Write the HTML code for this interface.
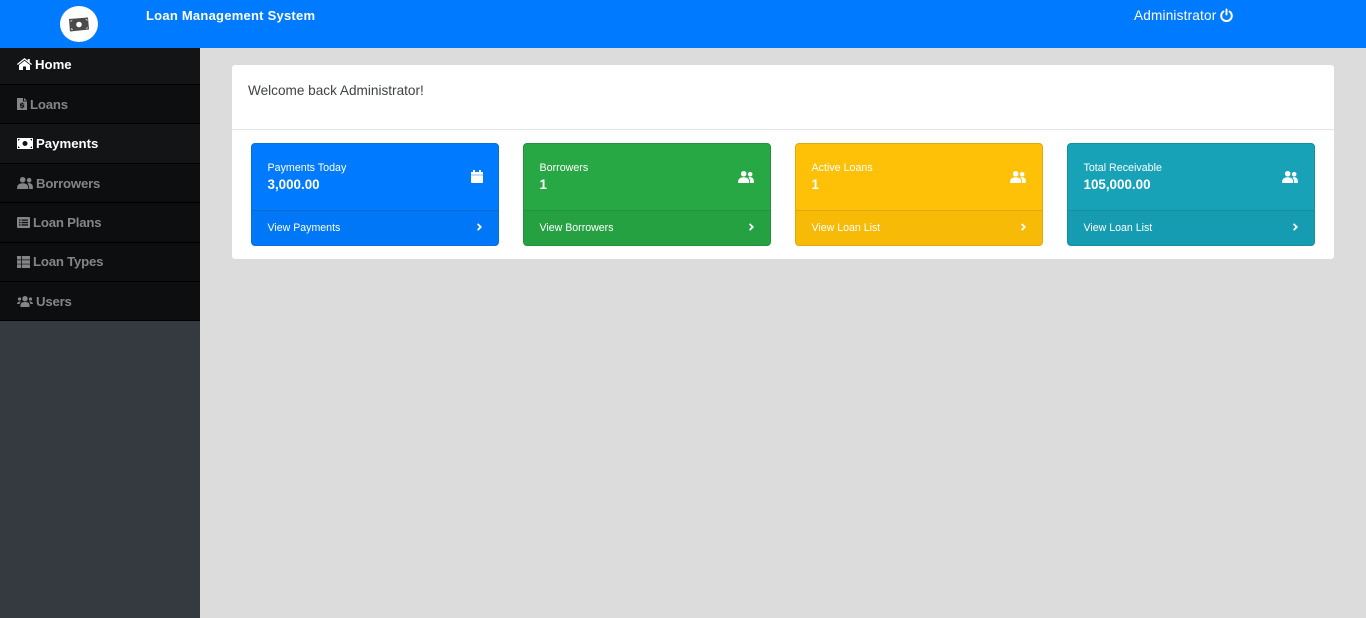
<!DOCTYPE html>
<html><head><meta charset="utf-8"><title>Loan Management System</title>
<style>
html,body{margin:0;padding:0}
body{width:1366px;height:618px;overflow:hidden;background:#dcdcdc;position:relative;font-family:"Liberation Sans",sans-serif;color:#fff}
.a{position:absolute;white-space:nowrap}
#top{left:0;top:0;width:1366px;height:48px;background:#007bff}
#side{left:0;top:48px;width:200px;height:570px;background:#343a40}
.n{position:absolute;left:0;width:200px;background:#0d0e10;border-bottom:1px solid #000;box-sizing:border-box}
.n.on{background:#131416}
.n span{position:absolute;font-size:13.200px;line-height:16px;font-weight:700;color:#838587;white-space:nowrap;letter-spacing:-.2px}
.n.on span{color:#fff;letter-spacing:0}
.n svg{position:absolute;fill:#838587}
.n.on svg{fill:#fff}
#main{left:232px;top:65px;width:1102px;height:194px;background:#fff;border-radius:3px}
#line{left:232px;top:129px;width:1102px;height:1px;background:#e4e4e4}
.c{position:absolute;top:143px;width:248px;height:103px;box-sizing:border-box;border-radius:4px;border:1px solid}
.c .f{position:absolute;left:0;right:0;top:66px;bottom:0;border-top:1px solid;border-radius:0 0 3px 3px;background:rgba(0,0,0,.03)}
.c .t{position:absolute;left:15.500px;top:18px;font-size:10.700px;line-height:13px;white-space:nowrap}
.c .v{position:absolute;left:15.500px;top:33px;font-size:13.400px;line-height:16px;font-weight:700;white-space:nowrap}
.c .l{position:absolute;left:15.500px;top:11px;font-size:10.600px;line-height:13px;white-space:nowrap}
.c svg{position:absolute;fill:#fff}
</style></head><body>
<div class="a" id="top"></div>
<div class="a" style="left:60px;top:6px;width:38px;height:36px;border-radius:50%;background:#fff"></div>
<svg class="a" style="left:69px;top:17px" width="20" height="15" viewBox="0 0 20 15"><path fill="#4a4a4a" d="M0 2 19 .5 20 12.500 1 14.500Z"/><circle cx="10" cy="7.500" r="2.800" fill="#fff"/><path fill="#ccc" d="M1.500 3.200h2.300l-2.100 2zM18.400 2v2.300l-2.100-2.100zM2.200 13v-2.300l2.200 2.100zM18.800 11.400l-2.300.3 2.100-2.100z"/></svg>
<div class="a" style="left:146px;top:8px;font-size:13px;font-weight:700;line-height:15px;letter-spacing:.24px">Loan Management System</div>
<div class="a" style="left:1134px;top:8px;font-size:13.600px;line-height:15px;letter-spacing:.18px">Administrator</div>
<svg class="a" style="left:1220px;top:8px" width="13" height="14" viewBox="0 0 13 14"><path fill="none" stroke="#fff" stroke-width="2" stroke-linecap="round" d="M3.400 3.500A5.300 5.300 0 1 0 9.600 3.500M6.500 1.500v5"/></svg>

<div class="a" id="side"></div>
<div class="n on" style="top:48px;height:37px"><svg style="left:17px;top:10px" width="15" height="12" viewBox="0 0 15 12"><path d="M7.500 0 10.800 2.600V1H12.800V4.200L15 6 14.200 7 7.500 1.600.8 7 0 6ZM2 7 7.500 2.800 13 7V12H9V8.500H6V12H2Z"/></svg><span style="left:35px;top:9px">Home</span></div>
<div class="n" style="top:85px;height:39px"><svg style="left:17px;top:13px" width="10" height="12" viewBox="0 0 10 12"><path fill-rule="evenodd" d="M0 0H6V3.500H10V12H0ZM7 0 10 2.600H7ZM4.500 4.500h1.200v1h1.500v1H4.200v.6H7.200V9.500H5.700v1H4.500v-1H3v-1H6v-.6H3V5.500H4.500Z"/></svg><span style="left:30px;top:12px">Loans</span></div>
<div class="n on" style="top:124px;height:40px"><svg style="left:17px;top:14px" width="16" height="11" viewBox="0 0 16 11"><path fill-rule="evenodd" d="M0 0H16V11H0ZM8 3A2.500 2.500 0 1 0 8 8 2.500 2.500 0 0 0 8 3ZM1 1V3L3 1ZM15 1H13L15 3ZM1 10H3L1 8ZM15 10V8L13 10Z"/></svg><span style="left:36px;top:12px">Payments</span></div>
<div class="n" style="top:164px;height:39px"><svg style="left:17px;top:13px" width="16" height="12" viewBox="0 0 17 13"><circle cx="6" cy="3" r="3"/><circle cx="13" cy="3.500" r="2.500"/><path d="M0 13V11.500C0 8.500 2.500 6.800 6 6.800S12 8.500 12 11.500V13ZM13 13V11.500C13 9.500 12.200 8 11 7 14 5.800 17 7.500 17 10.500V13Z"/></svg><span style="left:36px;top:12px">Borrowers</span></div>
<div class="n" style="top:203px;height:40px"><svg style="left:17px;top:14px" width="13" height="11" viewBox="0 0 13 11"><path fill-rule="evenodd" d="M1 0H12Q13 0 13 1V10Q13 11 12 11H1Q0 11 0 10V1Q0 0 1 0ZM2 2.500V3.800H3.500V2.500ZM2 4.900V6.200H3.500V4.900ZM2 7.300V8.600H3.500V7.300ZM4.500 2.500V3.800H11V2.500ZM4.500 4.900V6.200H11V4.900ZM4.500 7.300V8.600H11V7.300Z"/></svg><span style="left:33px;top:12px">Loan Plans</span></div>
<div class="n" style="top:243px;height:39px"><svg style="left:17px;top:13px" width="13" height="12" viewBox="0 0 13 12"><path d="M0 0H4V3.500H0ZM4.800 0H13V3.500H4.800ZM0 4.200H4V7.700H0ZM4.800 4.200H13V7.700H4.800ZM0 8.400H4V12H0ZM4.800 8.400H13V12H4.800Z"/></svg><span style="left:33px;top:11px">Loan Types</span></div>
<div class="n" style="top:282px;height:39px"><svg style="left:17px;top:14px" width="16" height="11" viewBox="0 0 16 11"><circle cx="8" cy="2.700" r="2.700"/><circle cx="2.500" cy="3" r="1.600"/><circle cx="13.500" cy="3" r="1.600"/><path d="M3.500 11V9C3.500 7 5 6 8 6S12.500 7 12.500 9V11ZM0 8C0 6 2 5.300 4 5.500 3 6.300 2.700 7.100 2.600 8ZM16 8C16 6 14 5.300 12 5.500 13 6.300 13.300 7.100 13.400 8Z"/></svg><span style="left:36px;top:12px">Users</span></div>

<div class="a" id="main"></div>
<div class="a" id="line"></div>
<div class="a" style="left:248px;top:83px;font-size:13.600px;line-height:16px;color:#3f4347">Welcome back Administrator!</div>

<div class="c" style="left:251px;background:#007bff;border-color:#0a6fd8">
 <div class="t">Payments Today</div><div class="v">3,000.00</div>
 <svg style="left:219px;top:26px" width="12" height="13" viewBox="0 0 12 13"><path d="M2 0h2v2h4V0h2v2h2v2.800H0V2h2ZM0 5.300H12V12Q12 13 11 13H1Q0 13 0 12Z"/></svg>
 <div class="f" style="border-color:#0a6ac9"><div class="l">View Payments</div><svg style="left:224.500px;top:12px" width="5" height="8" viewBox="0 0 6 9"><path d="M1.500 0 6 4.500 1.500 9 0 7.500 3 4.500 0 1.500Z"/></svg></div>
</div>
<div class="c" style="left:523px;background:#28a745;border-color:#23923d">
 <div class="t">Borrowers</div><div class="v">1</div>
 <svg style="left:214px;top:27px" width="16" height="12" viewBox="0 0 17 13"><circle cx="6" cy="3" r="3"/><circle cx="13" cy="3.500" r="2.500"/><path d="M0 13V11.500C0 8.500 2.500 6.800 6 6.800S12 8.500 12 11.500V13ZM13 13V11.500C13 9.500 12.200 8 11 7 14 5.800 17 7.500 17 10.500V13Z"/></svg>
 <div class="f" style="border-color:#23923d"><div class="l">View Borrowers</div><svg style="left:224.500px;top:12px" width="5" height="8" viewBox="0 0 6 9"><path d="M1.500 0 6 4.500 1.500 9 0 7.500 3 4.500 0 1.500Z"/></svg></div>
</div>
<div class="c" style="left:795px;background:#ffc107;border-color:#deaa0f">
 <div class="t">Active Loans</div><div class="v">1</div>
 <svg style="left:214px;top:27px" width="16" height="12" viewBox="0 0 17 13"><circle cx="6" cy="3" r="3"/><circle cx="13" cy="3.500" r="2.500"/><path d="M0 13V11.500C0 8.500 2.500 6.800 6 6.800S12 8.500 12 11.500V13ZM13 13V11.500C13 9.500 12.200 8 11 7 14 5.800 17 7.500 17 10.500V13Z"/></svg>
 <div class="f" style="border-color:#deaa0f"><div class="l">View Loan List</div><svg style="left:224.500px;top:12px" width="5" height="8" viewBox="0 0 6 9"><path d="M1.500 0 6 4.500 1.500 9 0 7.500 3 4.500 0 1.500Z"/></svg></div>
</div>
<div class="c" style="left:1067px;background:#17a2b8;border-color:#148ea1">
 <div class="t">Total Receivable</div><div class="v">105,000.00</div>
 <svg style="left:214px;top:27px" width="16" height="12" viewBox="0 0 17 13"><circle cx="6" cy="3" r="3"/><circle cx="13" cy="3.500" r="2.500"/><path d="M0 13V11.500C0 8.500 2.500 6.800 6 6.800S12 8.500 12 11.500V13ZM13 13V11.500C13 9.500 12.200 8 11 7 14 5.800 17 7.500 17 10.500V13Z"/></svg>
 <div class="f" style="border-color:#148ea1"><div class="l">View Loan List</div><svg style="left:224.500px;top:12px" width="5" height="8" viewBox="0 0 6 9"><path d="M1.500 0 6 4.500 1.500 9 0 7.500 3 4.500 0 1.500Z"/></svg></div>
</div>
</body></html>
